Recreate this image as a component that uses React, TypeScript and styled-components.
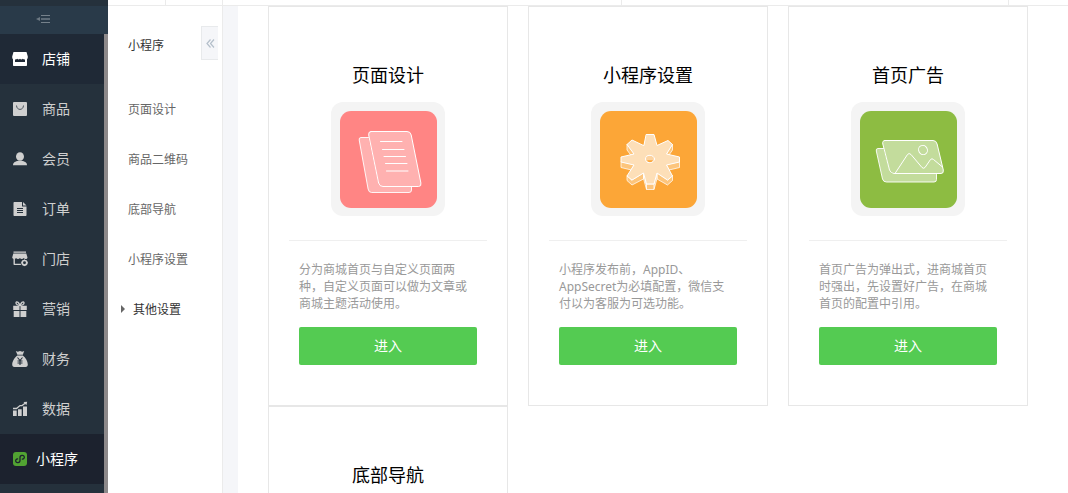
import React from "react";
import styled, { createGlobalStyle } from "styled-components";

const GlobalStyle = createGlobalStyle`
  * { box-sizing: border-box; }
  body {
    margin: 0;
    background: #fff;
    font-family: "Noto Sans", "Noto Sans CJK SC", sans-serif;
    font-size: 12px;
    color: #333;
  }
  h1, h2, p, ul { margin: 0; padding: 0; font-weight: 400; }
  ul { list-style: none; }
  a { color: inherit; text-decoration: none; }
  button { font-family: inherit; cursor: pointer; }
`;

const Shell = styled.div`
  display: flex;
  height: 100vh;
  overflow: hidden;
`;

const Sidebar = styled.aside`
  display: flex;
  flex-direction: column;
  flex: none;
  width: 108px;
  padding-top: 6px;
  background: #25313c;
`;

const FoldButton = styled.button`
  display: flex;
  flex: none;
  align-items: center;
  height: 28px;
  padding: 0 36px;
  border: 0;
  background: #293a49;
`;

const NavList = styled.ul`
  flex: 1;
  overflow: hidden;
  border-right: 4px solid #8d898a;
`;

type Tone = "normal" | "hover" | "current";

const navBackground: Record<Tone, string> = {
  normal: "transparent",
  hover: "#1f2936",
  current: "#1c222e",
};

const NavLink = styled.a<{ $tone: Tone }>`
  display: flex;
  align-items: center;
  gap: 8px;
  height: 50px;
  padding-left: 12px;
  font-size: 14px;
  color: ${(p) => (p.$tone === "normal" ? "#cfcfcf" : "#fff")};
  background: ${(p) => navBackground[p.$tone]};
`;

const NavLabel = styled.span<{ $short: boolean }>`
  padding: 0 0 2px ${(p) => (p.$short ? 6 : 0)}px;
  white-space: nowrap;
`;

const Page = styled.div`
  display: flex;
  flex: 1;
  flex-direction: column;
  min-width: 0;
`;

const TopBar = styled.header`
  display: flex;
  flex: none;
  height: 6px;
  border-bottom: 1px solid #ebebeb;
`;

const TopCell = styled.div<{ $width?: number }>`
  flex: ${(p) => (p.$width ? `0 0 ${p.$width}px` : "1")};
  border-right: 1px solid #ebebeb;
`;

const TopEnd = styled.div`
  flex: 0 0 59px;
`;

const Body = styled.div`
  display: flex;
  flex: 1;
  min-height: 0;
`;

const SubMenu = styled.nav`
  flex: none;
  width: 115px;
  border-right: 1px solid #ebebeb;
`;

const SubHeader = styled.div`
  display: flex;
  align-items: flex-start;
  justify-content: space-between;
  height: 78px;
  padding: 0 4px 0 20px;
`;

const SubTitle = styled.h1`
  font-size: 12px;
  line-height: 80px;
`;

const CollapseButton = styled.button`
  display: flex;
  align-items: center;
  justify-content: center;
  width: 17px;
  height: 34px;
  margin-top: 20px;
  padding: 0;
  border: 1px solid #e8eaec;
  border-right: 0;
  background: #f5f6f9;
`;

const SubLink = styled.a<{ $group?: boolean }>`
  display: flex;
  align-items: center;
  gap: 8px;
  height: 50px;
  padding-left: ${(p) => (p.$group ? 12 : 20)}px;
  color: ${(p) => (p.$group ? "#333" : "#666")};
`;

const Gutter = styled.div`
  flex: none;
  width: 15px;
  background: #f5f6f9;
`;

const Content = styled.main`
  flex: 1;
  overflow-y: auto;
  scrollbar-width: none;
  padding: 0 30px;
`;

const CardGrid = styled.div`
  display: grid;
  grid-template-columns: repeat(auto-fill, 240px);
  column-gap: 20px;
`;

const CardBox = styled.article`
  display: flex;
  flex-direction: column;
  align-items: center;
  padding: 56px 20px 40px;
  border: 1px solid #e7e7e7;
`;

const CardTitle = styled.h2`
  font-size: 18px;
  line-height: 24px;
  color: #000;
`;

const Frame = styled.div`
  display: flex;
  margin: 15px 0 24px;
  padding: 9px 8px 8px 9px;
  border-radius: 12px;
  background: #f4f4f4;
`;

const Tile = styled.div<{ $color: string }>`
  display: flex;
  border-radius: 11px;
  background: ${(p) => p.$color};
`;

const CardFoot = styled.div`
  align-self: stretch;
  padding: 20px 10px 0;
  border-top: 1px solid #efefef;
`;

const Description = styled.p`
  min-height: 51px;
  padding-right: 5px;
  line-height: 17px;
  color: #999;
`;

const EnterButton = styled.button`
  display: block;
  width: 100%;
  height: 38px;
  margin-top: 15px;
  padding: 0 0 2px;
  border: 0;
  border-radius: 2px;
  background: #54cb52;
  color: #fff;
  font-size: 14px;
`;

const Glyph = ({ children }: { children: React.ReactNode }) => (
  <svg width="16" height="16" viewBox="0 0 16 16" fill="currentColor" aria-hidden="true">
    {children}
  </svg>
);

const DARK = "#25313c";

const ShopIcon = () => (
  <Glyph>
    <path d="M1.500 1h13l1.300 4.500c0 1.500-.2 2.200-.8 2.700V14c0 .6-.4 1-1 1H2c-.6 0-1-.4-1-1V8.200C.4 7.700.2 7 .2 5.500z" />
    <path d="M3 8.500c1 .1 1.700-.300 2.300-.8.6.8 1.600 1.200 2.700.1 1 1.100 2.100.7 2.700-.1.500.5 1.200.9 2.300.8v2.600H3z" fill="#1f2936" />
  </Glyph>
);

const GoodsIcon = () => (
  <Glyph>
    <rect x="1" y="1" width="14" height="14" rx="1" />
    <path d="M4.500 4.500C4.700 9.700 11.300 9.700 11.500 4.500" fill="none" stroke="#4d565f" />
  </Glyph>
);

const MemberIcon = () => (
  <Glyph>
    <ellipse cx="8" cy="5.500" rx="4" ry="4.300" />
    <path d="M1 14.200c0-3 2.600-3.900 5.200-4.500h3.600c2.600.6 5.200 1.500 5.200 4.500z" />
  </Glyph>
);

const OrderIcon = () => (
  <Glyph>
    <path d="M2.500 1H10v4.500h4.500V14c0 .600-.400 1-1 1h-11c-.600 0-1-.400-1-1V2c0-.600.400-1 1-1z" />
    <path d="M11 1l3.500 3.500H11z" />
    <path d="M5 7.500h6M5 9.500h6M5 11.500h6" stroke={DARK} />
  </Glyph>
);

const StoreIcon = () => (
  <Glyph>
    <path d="M1.500.500h12.500v1.200H1.500zM1.300 2.500h13l1.200 4c-.2 1.300-1 1.500-1.900 1.500-.8 0-1.500-.3-1.900-.9-.7 1.200-3.100 1.200-3.800 0-.7 1.200-3.100 1.200-3.800 0-.9 1.300-3.600 1.200-3.900-.6z" />
    <path d="M1.500 8h1.400v4.800h6V14H2.500c-.600 0-1-.400-1-1z" />
    <circle cx="12.500" cy="11.800" r="2.300" fill="none" stroke="currentColor" strokeWidth="1.700" />
    <path d="M12.500 8.500v1.500M12.500 13.600v1.500M9.200 11.800h1.500M14.300 11.800h1.500" stroke="currentColor" />
  </Glyph>
);

const GiftIcon = () => (
  <Glyph>
    <path d="M1.200 4.700h6.300v4.300H1.200zM8.500 4.700h6.300v4.300H8.500zM1.700 9.900h5.800V16H1.700zM8.500 9.900h5.800V16H8.500z" />
    <path d="M7.800 4.500C6.500 4.500 3.500 3.500 4 1.600 4.800-.1 7.300 1.700 7.800 4.500zM8.200 4.500C9.500 4.500 12.500 3.500 12 1.600 11.200-.1 8.700 1.700 8.200 4.500z" fill="none" stroke="currentColor" strokeWidth="1.300" />
  </Glyph>
);

const MoneyIcon = () => (
  <Glyph>
    <path d="M3.800 0l2 .7L8 0l2.200.7 2-.7-1.400 3.700H5.400zM5.400 4.500h5.400c2.700 2 5 5.500 5 9 0 1.500-.7 2.500-2.200 2.500H2.400C.9 16 .2 15 .2 13.500c0-3.500 2.500-7 5.200-9z" />
    <path d="M5.500 6.500L8 9.500l2.500-3M8 9.500V14M5.500 10h5M5.500 12h5" fill="none" stroke={DARK} strokeWidth="1.100" />
  </Glyph>
);

const ChartIcon = () => (
  <Glyph>
    <path d="M1 9.500h3.700V15H1zM6 8.300h3.700V15H6zM11 5.500h4V15h-4z" />
    <path d="M1 7.500h3.500L8 4.600h2L13.500 2" fill="none" stroke="currentColor" strokeWidth="1.300" />
    <path d="M11.500 1l3.700-.2-.8 3.500z" />
  </Glyph>
);

const MiniProgramIcon = () => (
  <Glyph>
    <rect x="1" y="1" width="14" height="14" rx="3" fill="#51a332" />
    <path
      d="M5.600 7.900C4.200 8.100 3.500 9.100 3.700 10.200c.4 2 4.300 2 4.300-.7V6.500c0-2.700 3.900-2.700 4.300-.7.200 1.100-.5 2.100-1.900 2.300"
      fill="none"
      stroke="#1c222e"
      strokeWidth="1.300"
      strokeLinecap="round"
    />
  </Glyph>
);

const FoldIcon = () => (
  <svg width="15" height="10" viewBox="0 0 15 10" aria-hidden="true">
    <path d="M5 .5h9M5 7.500h9" stroke="#75818b" />
    <path d="M5 4h9" stroke="#5d6b77" strokeWidth="2" />
    <path d="M0 4l4-2v4z" fill="#6d7983" />
  </svg>
);

const CollapseIcon = () => (
  <svg width="9" height="9" viewBox="0 0 9 9" fill="none" stroke="#b4bfca" strokeWidth="1.200" aria-hidden="true">
    <path d="M4.500.5L1 4.500l3.500 4M8 .5L4.500 4.500 8 8.500" />
  </svg>
);

const CaretIcon = () => (
  <svg width="5" height="8" viewBox="0 0 5 8" aria-hidden="true">
    <path d="M1 0l4 4-4 4z" fill="#666" />
  </svg>
);

const Drawing = ({ children }: { children: React.ReactNode }) => (
  <svg
    width="97"
    height="97"
    viewBox="0 0 97 97"
    fill="none"
    stroke="#fff"
    strokeLinejoin="round"
    strokeLinecap="round"
    aria-hidden="true"
  >
    {children}
  </svg>
);

const PagesDrawing = () => (
  <Drawing>
    <path
      d="M28.500 26.500H21q-2.200 0-1.800 2.500l8.900 49q.600 3.500 3.500 3.500H69q2.500 0 2.500-2.500v-3.500H43q-4 0-4.700-3.500z"
      fill="#fff"
      fillOpacity=".36"
      stroke="none"
    />
    <path d="M28.500 26.500H21q-2.200 0-1.800 2.500l8.900 49q.600 3.500 3.500 3.500H69q2.500 0 2.500-2.500v-3" strokeOpacity=".9" />
    <path
      d="M31 20.500h36q3.500 0 4.200 3.500l9.700 48q.700 3.500-2.400 3.500H43q-3.600 0-4.400-3.500L28.700 24q-.6-3.500 2.300-3.500z"
      fill="#fff"
      fillOpacity=".36"
    />
    <path d="M40.500 30.500h21.500M42.500 38.500h21.500M44 45.500h21.500M45.500 52.500h21.500M46.500 60h21.500" />
  </Drawing>
);

const GearDrawing = () => (
  <Drawing>
    <path
      d="M27 33.500v5.500l4.500 6L34 43zM72.500 33.500v5.500l-3.500 5-2.500-1zM21 51v5.500l10.500 2.500L34 54zM79.500 51v5.500l-10.500 2.500-2.500-5zM27 65v4.500l5 4.500 11.500-6V62L32 69zM72.500 65v4.500l-5 4.500L57 68V62l10.500 7zM43.500 62v5.500l3 11H54l3-11V62l-3 11h-7.500z"
      fill="#fff"
      fillOpacity=".35"
      strokeOpacity=".75"
    />
    <path
      d="M46.500 23.500H54L57 34.500L68 29.500L72.500 33.500L66.500 43L79.500 46V51L66.500 54L72.500 65L67.500 69L57 62L54 73H46.500L43.500 62L32 69L27 65L34 54L21 51V46L34 43L27 33.500L32 29L43.500 34.500Z"
      fill="#fddfb8"
    />
    <path d="M46.500 73v5M54 73v5" strokeOpacity=".8" />
    <ellipse cx="50" cy="48" rx="4.500" ry="3.700" fill="#fdd3a0" />
    <path d="M47 49.300h6q-1 1.900-3 1.900t-3-1.900z" fill="#fca637" stroke="none" />
  </Drawing>
);

const PhotosDrawing = () => (
  <Drawing>
    <path
      d="M23.500 37.500H18q-2.200 0-1.700 2.500L22.500 68q.8 3 4 3H74q2.500 0 2.500-2.500V63H34q-3.500 0-4.500-3.500z"
      fill="#fff"
      fillOpacity=".48"
      stroke="none"
    />
    <path d="M23.500 37.500H18q-2.200 0-1.700 2.500L22.500 68q.8 3 4 3H74q2.500 0 2.500-2.500V63.500" strokeOpacity=".9" />
    <path
      d="M25 29.500h48q3.300 0 4.100 3.500l6.200 26q.6 3.500-2.300 3.500H34q-3.500 0-4.500-3.500L22.800 33q-.8-3.500 2.200-3.500z"
      fill="#fff"
      fillOpacity=".48"
    />
    <path d="M35 62.500L47.500 43.500q1.500-2 3.500 0L62 56.500q1.500 1.500 3 0l5.500-8q1.500-1.500 3 0L82.500 56" />
    <ellipse cx="63" cy="39" rx="4.300" ry="4.700" transform="rotate(-30 63 39)" />
  </Drawing>
);

const NavbarDrawing = () => (
  <Drawing>
    <rect x="26" y="20" width="45" height="58" rx="4" fill="#fff" fillOpacity=".4" />
    <path d="M26 66h45M41 66v12M56 66v12" />
  </Drawing>
);

const navItems: { label: string; icon: React.FC; tone: Tone }[] = [
  { label: "店铺", icon: ShopIcon, tone: "hover" },
  { label: "商品", icon: GoodsIcon, tone: "normal" },
  { label: "会员", icon: MemberIcon, tone: "normal" },
  { label: "订单", icon: OrderIcon, tone: "normal" },
  { label: "门店", icon: StoreIcon, tone: "normal" },
  { label: "营销", icon: GiftIcon, tone: "normal" },
  { label: "财务", icon: MoneyIcon, tone: "normal" },
  { label: "数据", icon: ChartIcon, tone: "normal" },
  { label: "小程序", icon: MiniProgramIcon, tone: "current" },
];

const subItems = ["页面设计", "商品二维码", "底部导航", "小程序设置"];

const cards: { title: string; color: string; drawing: React.FC; text: string }[] = [
  {
    title: "页面设计",
    color: "#ff8584",
    drawing: PagesDrawing,
    text: "分为商城首页与自定义页面两种，自定义页面可以做为文章或商城主题活动使用。",
  },
  {
    title: "小程序设置",
    color: "#fca637",
    drawing: GearDrawing,
    text: "小程序发布前，AppID、AppSecret为必填配置，微信支付以为客服为可选功能。",
  },
  {
    title: "首页广告",
    color: "#8dbc42",
    drawing: PhotosDrawing,
    text: "首页广告为弹出式，进商城首页时强出，先设置好广告，在商城首页的配置中引用。",
  },
  { title: "底部导航", color: "#5aa9f0", drawing: NavbarDrawing, text: "" },
];

export default function App() {
  return (
    <Shell>
      <GlobalStyle />
      <Sidebar>
        <FoldButton type="button" aria-label="Fold">
          <FoldIcon />
        </FoldButton>
        <NavList>
          {navItems.map(({ label, icon: Icon, tone }) => (
            <li key={label}>
              <NavLink href="#" $tone={tone}>
                <Icon />
                <NavLabel $short={label.length < 3}>{label}</NavLabel>
              </NavLink>
            </li>
          ))}
        </NavList>
      </Sidebar>
      <Page>
        <TopBar>
          <TopCell $width={58} />
          <TopCell $width={57} />
          <TopCell />
          <TopCell $width={387} />
          <TopEnd />
        </TopBar>
        <Body>
          <SubMenu>
            <SubHeader>
              <SubTitle>小程序</SubTitle>
              <CollapseButton type="button" aria-label="Collapse">
                <CollapseIcon />
              </CollapseButton>
            </SubHeader>
            <ul>
              {subItems.map((label) => (
                <li key={label}>
                  <SubLink href="#">{label}</SubLink>
                </li>
              ))}
              <li>
                <SubLink href="#" $group>
                  <CaretIcon />
                  其他设置
                </SubLink>
              </li>
            </ul>
          </SubMenu>
          <Gutter />
          <Content>
            <CardGrid>
              {cards.map(({ title, color, drawing: Art, text }) => (
                <CardBox key={title}>
                  <CardTitle>{title}</CardTitle>
                  <Frame>
                    <Tile $color={color}>
                      <Art />
                    </Tile>
                  </Frame>
                  <CardFoot>
                    <Description>{text}</Description>
                    <EnterButton type="button">进入</EnterButton>
                  </CardFoot>
                </CardBox>
              ))}
            </CardGrid>
          </Content>
        </Body>
      </Page>
    </Shell>
  );
}
